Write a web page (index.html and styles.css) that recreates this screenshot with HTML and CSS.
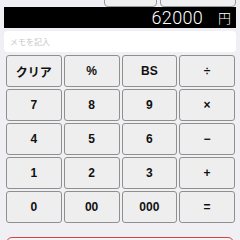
FILE: index.html
```html
<!DOCTYPE html>
<html lang="ja">
<head>
<meta charset="utf-8">
<link rel="stylesheet" href="styles.css">
</head>
<body>
<div class="toprow">
  <div class="topbtn b1"></div>
  <div class="topbtn b2"></div>
</div>
<div class="display"><span class="amount">62000</span><span class="yen">円</span></div>
<div class="memo">メモを記入</div>
<div class="keys">
  <div class="key">クリア</div>
  <div class="key">%</div>
  <div class="key">BS</div>
  <div class="key">÷</div>
  <div class="key">7</div>
  <div class="key">8</div>
  <div class="key">9</div>
  <div class="key">×</div>
  <div class="key">4</div>
  <div class="key">5</div>
  <div class="key">6</div>
  <div class="key">−</div>
  <div class="key">1</div>
  <div class="key">2</div>
  <div class="key">3</div>
  <div class="key">+</div>
  <div class="key">0</div>
  <div class="key">00</div>
  <div class="key">000</div>
  <div class="key">=</div>
</div>
<div class="redbar"></div>
</body>
</html>
```
FILE: styles.css
```css
html, body {
  margin: 0;
  padding: 0;
  background: #efeff4;
  overflow: hidden;
  font-family: "Liberation Sans", "Noto Sans CJK JP", sans-serif;
}
.toprow {
  height: 7px;
  display: flex;
  align-items: flex-end;
  overflow: hidden;
}
.topbtn {
  height: 30px;
  flex: none;
  background: #efefef;
  border: 1px solid #9a9a9a;
  border-radius: 4px;
  box-sizing: border-box;
}
.b1 { width: 53px; margin-left: 104px; }
.b2 { width: 76px; margin-left: 3px; }
.display {
  margin: 0 4px;
  height: 21px;
  background: #000;
  color: #fff;
  display: flex;
  align-items: center;
  justify-content: flex-end;
  padding-right: 5px;
}
.amount {
  font-family: Roboto, "Liberation Sans", sans-serif;
  font-size: 18px;
  font-weight: 300;
  letter-spacing: 0.3px;
}
.yen {
  font-family: "Noto Sans CJK JP", sans-serif;
  font-weight: 300;
  font-size: 13px;
  margin-left: 15px;
}
.memo {
  margin: 3px 4px 0;
  height: 21px;
  background: #fff;
  border-radius: 4px;
  color: #c8c8cc;
  font-family: "Noto Sans CJK JP", sans-serif;
  font-size: 8px;
  display: flex;
  align-items: center;
  padding-left: 6px;
}
.keys {
  margin: 3px 5px 0 6px;
  display: grid;
  grid-template-columns: repeat(4, 1fr);
  grid-template-rows: repeat(5, 32px);
  gap: 2px 2px;
}
.key {
  background: #eeeeee;
  border: 1px solid #8f8f8f;
  border-radius: 3px;
  display: flex;
  align-items: center;
  justify-content: center;
  font-weight: 700;
  font-size: 12px;
  color: #111;
  box-sizing: border-box;
}
.redbar {
  margin: 14px 6px 0;
  height: 30px;
  border: 1px solid #d9413e;
  border-radius: 6px;
  background: #f4f4f6;
}
```
